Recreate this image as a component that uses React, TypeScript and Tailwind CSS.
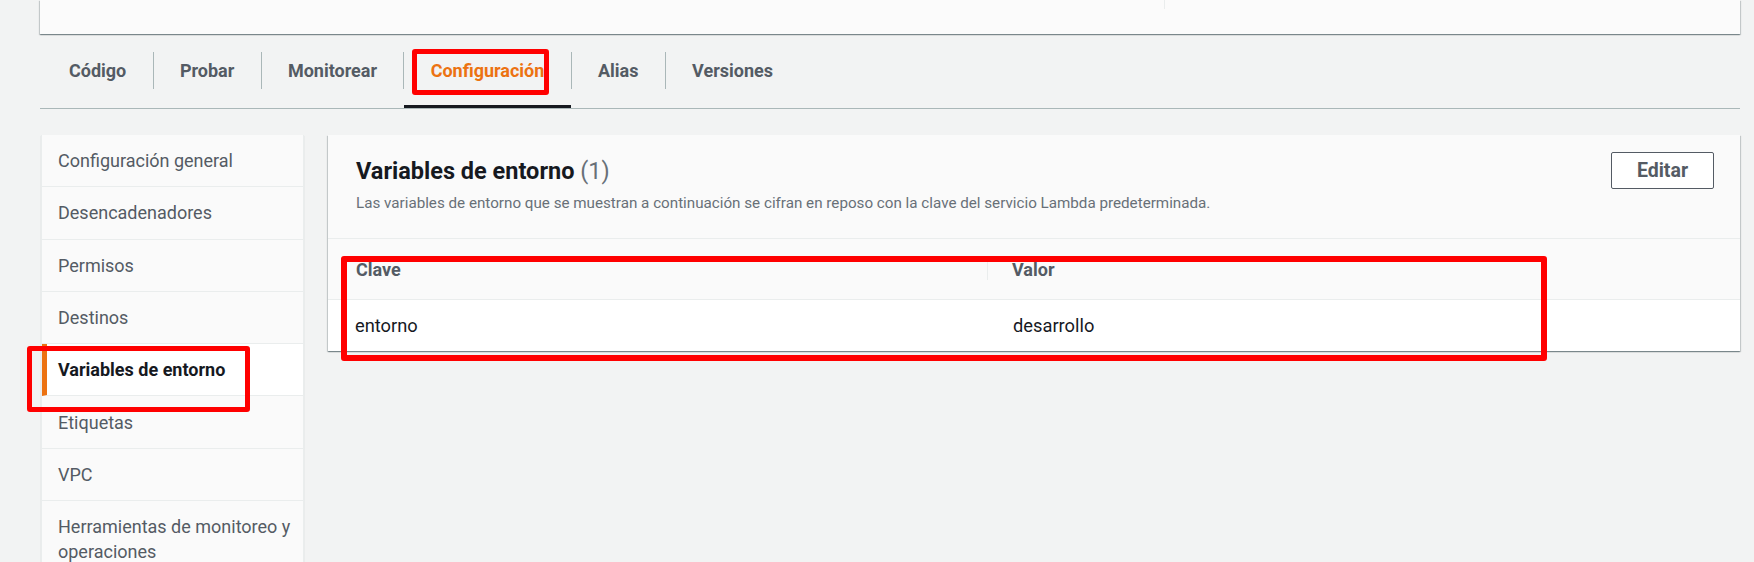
import React from 'react';

const tabs = ['Código', 'Probar', 'Monitorear', 'Configuración', 'Alias', 'Versiones'];

const menu = [
  'Configuración general',
  'Desencadenadores',
  'Permisos',
  'Destinos',
  'Variables de entorno',
  'Etiquetas',
  'VPC',
  'Herramientas de monitoreo y operaciones',
];

const App = () => {
  const activeTab = 'Configuración';
  const activeItem = 'Variables de entorno';

  return (
    <div className="min-h-[562px] bg-[#f2f3f3] pl-[40px] pr-[14px] font-['Roboto','Liberation_Sans',sans-serif] overflow-hidden">
      {/* top card, cut by the window */}
      <div className="h-[34px] bg-[#fbfbfb] shadow-[0_1px_1px_0_rgba(0,28,36,0.3),1px_1px_1px_0_rgba(0,28,36,0.15),-1px_1px_1px_0_rgba(0,28,36,0.15)]">
        <div className="w-[1125px] h-[9px] border-r border-[#eaeded]" />
      </div>

      {/* tabs */}
      <div className="mt-[18px] flex border-b border-[#aab7b8]">
        {tabs.map((t, i) => (
          <React.Fragment key={t}>
            {i > 0 && <div className="w-px h-[37px] bg-[#aab7b8]" />}
            <div className="relative flex flex-col">
              <div
                className={
                  'h-[37px] flex items-center text-[18px] font-bold ' +
                  (i === 0 ? 'pl-[29px] pr-[26.3px] ' : 'px-[26.3px] ') +
                  (t === activeTab ? 'text-[#ec7211]' : 'text-[#545b64]')
                }
              >
                {t}
              </div>
              <div className="h-[16px]" />
              <div className={'h-[3px] ' + (t === activeTab ? 'bg-[#16191f]' : 'bg-transparent')} />
              {t === activeTab && (
                <div className="absolute left-[8px] top-[-3px] w-[137px] h-[46px] border-[5px] border-[#ff0000] rounded-[3px]" />
              )}
            </div>
          </React.Fragment>
        ))}
      </div>

      <div className="mt-[26px] flex items-start gap-[24px]">
        {/* side menu */}
        <div className="relative ml-px w-[263px] shrink-0 bg-[#fafafa] border-x border-[#eaeded] shadow-[0_1px_1px_0_rgba(0,28,36,0.2)]">
          {menu.map((m) => (
            <div
              key={m}
              className={
                'py-[13.15px] pr-[6px] leading-[25px] text-[18px] border-b border-[#eaeded] ' +
                (m === activeItem
                  ? 'bg-white font-bold text-[#16191f] border-l-[5px] border-l-[#ec7211] pl-[11px]'
                  : 'text-[#545b64] pl-4')
              }
            >
              {m}
            </div>
          ))}
          <div className="absolute left-[-15px] top-[211px] w-[223px] h-[66px] border-[5px] border-[#ff0000] rounded-[3px]" />
        </div>

        {/* environment variables panel */}
        <div className="relative flex-1 bg-[#fafafa] shadow-[0_1px_1px_0_rgba(0,28,36,0.3),1px_1px_1px_0_rgba(0,28,36,0.15),-1px_1px_1px_0_rgba(0,28,36,0.15)]">
          <div className="flex items-start justify-between pl-[28px] pr-[26px] pt-[17px] h-[104px] border-b border-[#eaeded]">
            <div className="pt-[4px]">
              <div className="text-[23.5px] leading-[30px] font-bold text-[#16191f]">
                Variables de entorno <span className="font-normal text-[#687078]">(1)</span>
              </div>
              <div className="mt-[7px] text-[15.2px] leading-[20px] text-[#687078]">
                Las variables de entorno que se muestran a continuación se cifran en reposo con la clave del servicio Lambda predeterminada.
              </div>
            </div>
            <button
              type="button"
              className="w-[103px] h-[37px] border border-[#545b64] rounded-[2px] bg-white text-[19.5px] font-bold text-[#545b64]"
            >
              Editar
            </button>
          </div>

          <div className="flex h-[61px] items-center border-b border-[#eaeded] text-[18px] font-bold text-[#545b64]">
            <div className="w-[660px] pl-[28px] h-[22px] flex items-center border-r border-[#eaeded]">Clave</div>
            <div className="pl-[24px]">Valor</div>
          </div>

          <div className="flex h-[51px] items-center bg-white text-[18.3px] text-[#16191f]">
            <div className="w-[660px] pl-[27px]">entorno</div>
            <div className="pl-[25px]">desarrollo</div>
          </div>

          <div className="absolute left-[13px] top-[121px] w-[1206px] h-[105px] border-[6px] border-[#ff0000] rounded-[3px]" />
        </div>
      </div>
    </div>
  );
};

export default App;
